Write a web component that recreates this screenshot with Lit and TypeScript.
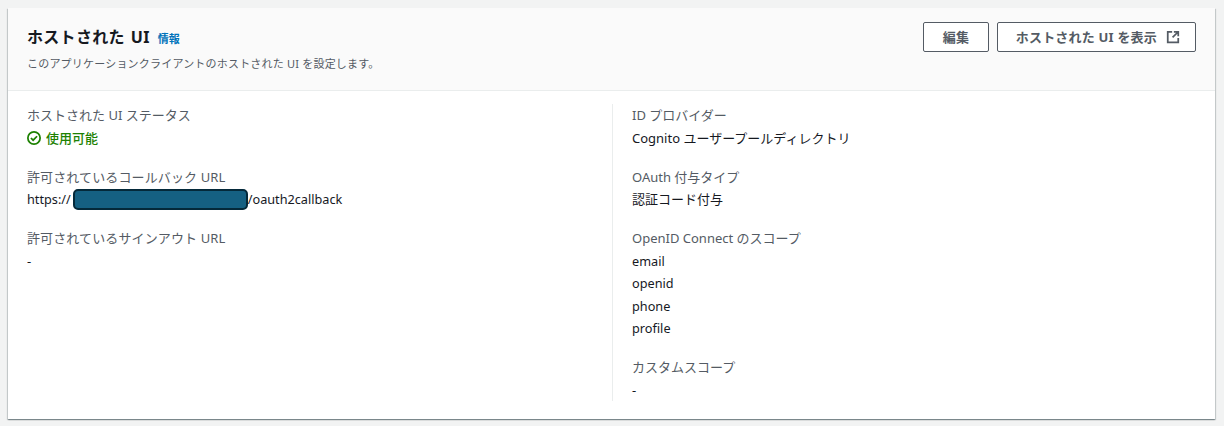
import { LitElement, html, css } from "lit";
import { customElement } from "lit/decorators.js";

@customElement("app-root")
export class AppRoot extends LitElement {
  static styles = css`
    :host {
      display: block;
      width: 1224px;
      height: 426px;
      box-sizing: border-box;
      padding: 8px 9px 7px 8px;
      background: #f2f3f3;
      font-family: "Noto Sans", "Noto Sans CJK JP", sans-serif;
      font-size: 13px;
      line-height: 22.5px;
      color: #16191f;
      overflow: hidden;
    }
    .card {
      height: 100%;
      box-sizing: border-box;
      background: #fff;
      box-shadow: 0 1px 1px 0 rgba(0, 28, 36, 0.3), 1px 1px 1px 0 rgba(0, 28, 36, 0.15), -1px 1px 1px 0 rgba(0, 28, 36, 0.15);
    }
    .head {
      height: 83px;
      box-sizing: border-box;
      background: #fafafa;
      border-bottom: 1px solid #eaeded;
      padding: 15px 19px 0;
      display: flex;
      justify-content: space-between;
    }
    .title-row {
      display: flex;
      align-items: baseline;
      gap: 8px;
    }
    h2 {
      margin: 0;
      font-size: 16px;
      font-weight: 700;
      line-height: 28px;
      letter-spacing: 0.3px;
      word-spacing: 1.5px;
    }
    .info {
      font-size: 11px;
      font-weight: 700;
      color: #0073bb;
    }
    .desc {
      font-size: 11px;
      line-height: 18px;
      letter-spacing: 0.2px;
      color: #545b64;
      margin-top: 4px;
    }
    .actions {
      display: flex;
      gap: 8px;
      align-items: flex-start;
      margin-top: -1px;
    }
    .btn {
      box-sizing: border-box;
      height: 30px;
      border: 1px solid #545b64;
      border-radius: 2px;
      background: #fff;
      color: #545b64;
      font: inherit;
      font-size: 13px;
      font-weight: 700;
      letter-spacing: 0.2px;
      padding: 0 18.5px;
      display: flex;
      align-items: center;
      gap: 9px;
    }
    .btn.ext {
      padding: 0 15px 0 18px;
    }
    .btn svg {
      width: 14px;
      height: 14px;
    }
    .body {
      display: grid;
      grid-template-columns: 1fr 1fr;
      padding: 13px 19px 0;
    }
    .col {
      display: flex;
      flex-direction: column;
      gap: 16.5px;
    }
    .col.right {
      border-left: 1px solid #eaeded;
      padding-left: 19.5px;
    }
    .label {
      color: #545b64;
    }
    .label.wide {
      letter-spacing: 0.12px;
    }
    .status {
      display: flex;
      align-items: center;
      gap: 5px;
      color: #1d8102;
      font-weight: 500;
    }
    .status svg {
      width: 14px;
      height: 14px;
    }
    .url {
      display: flex;
      align-items: center;
    }
    .latin {
      font-size: 12.7px;
    }
    .mask {
      display: inline-block;
      box-sizing: border-box;
      width: 175px;
      height: 21px;
      margin-left: 2px;
      background: #156082;
      border: 2px solid #04293a;
      border-radius: 5px;
    }
  `;

  render() {
    return html`
      <div class="card">
        <div class="head">
          <div>
            <div class="title-row"><h2>ホストされた UI</h2><span class="info">情報</span></div>
            <div class="desc">このアプリケーションクライアントのホストされた UI を設定します。</div>
          </div>
          <div class="actions">
            <button class="btn">編集</button>
            <button class="btn ext">ホストされた UI を表示
              <svg viewBox="0 0 16 16" fill="none" stroke="currentColor" stroke-width="2">
                <path d="M7 2H2v12h12V9" />
                <path d="M9 2h5v5M14 2L7.5 8.5" />
              </svg>
            </button>
          </div>
        </div>
        <div class="body">
          <div class="col">
            <div>
              <div class="label">ホストされた UI ステータス</div>
              <div class="status">
                <svg viewBox="0 0 16 16" fill="none" stroke="currentColor" stroke-width="2">
                  <circle cx="8" cy="8" r="7" />
                  <path d="M4.5 8l2.5 2.5 4.5-4.5" />
                </svg>
                使用可能
              </div>
            </div>
            <div>
              <div class="label wide">許可されているコールバック URL</div>
              <div class="url latin">https://<span class="mask"></span>/oauth2callback</div>
            </div>
            <div>
              <div class="label wide">許可されているサインアウト URL</div>
              <div>-</div>
            </div>
          </div>
          <div class="col right">
            <div>
              <div class="label">ID プロバイダー</div>
              <div>Cognito ユーザープールディレクトリ</div>
            </div>
            <div>
              <div class="label">OAuth 付与タイプ</div>
              <div>認証コード付与</div>
            </div>
            <div>
              <div class="label">OpenID Connect のスコープ</div>
              <div class="latin">email</div>
              <div class="latin">openid</div>
              <div class="latin">phone</div>
              <div class="latin">profile</div>
            </div>
            <div>
              <div class="label">カスタムスコープ</div>
              <div>-</div>
            </div>
          </div>
        </div>
      </div>
    `;
  }
}
